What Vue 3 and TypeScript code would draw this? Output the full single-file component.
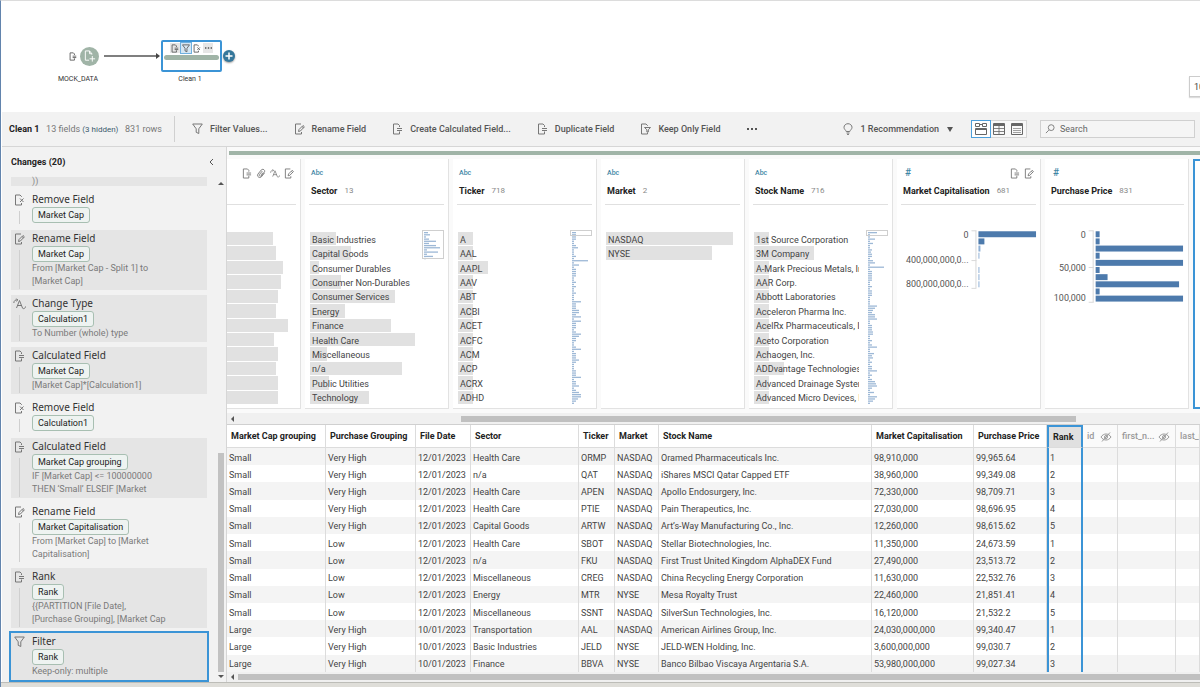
<script setup lang="ts">
interface Change {
  icon: string
  title: string
  field: string
  desc?: string[]
  plain?: boolean
  selected?: boolean
}

interface Bin {
  label: string
  w: number
}

interface Card {
  name: string
  type: string
  count: string
  icons: string[]
  bins?: Bin[]
  map?: number[]
  mapBox?: number
  clip?: boolean
  hist?: { axisX: number; rows: number; bars: number[]; labels: { text: string; y: number }[]; ticks: number[] }
}

const bins = (names: string[], widths: number[]): Bin[] =>
  names.map((label, i) => ({ label, w: widths[i] ?? 15 }))

const changes: Change[] = [
  { icon: 'remove', title: 'Remove Field', field: 'Market Cap', plain: true },
  { icon: 'rename', title: 'Rename Field', field: 'Market Cap', desc: ['From [Market Cap - Split 1] to', '[Market Cap]'] },
  { icon: 'type', title: 'Change Type', field: 'Calculation1', desc: ['To Number (whole) type'] },
  { icon: 'calc', title: 'Calculated Field', field: 'Market Cap', desc: ['[Market Cap]*[Calculation1]'] },
  { icon: 'remove', title: 'Remove Field', field: 'Calculation1', plain: true },
  { icon: 'calc', title: 'Calculated Field', field: 'Market Cap grouping', desc: ['IF [Market Cap] <= 100000000', 'THEN ‘Small’ ELSEIF [Market'] },
  { icon: 'rename', title: 'Rename Field', field: 'Market Capitalisation', desc: ['From [Market Cap] to [Market', 'Capitalisation]'], plain: true },
  { icon: 'calc', title: 'Rank', field: 'Rank', desc: ['{{PARTITION [File Date],', '[Purchase Grouping], [Market Cap'] },
  { icon: 'filter', title: 'Filter', field: 'Rank', desc: ['Keep-only: multiple'], selected: true },
]

const actions = [
  { icon: 'filter', label: 'Filter Values...' },
  { icon: 'rename', label: 'Rename Field' },
  { icon: 'calc', label: 'Create Calculated Field...' },
  { icon: 'calc', label: 'Duplicate Field' },
  { icon: 'keep', label: 'Keep Only Field' },
]

const leadBins = [46, 49, 56, 54, 51, 49, 61, 47, 51, 49, 51, 51]

const cards: Card[] = [
  {
    name: 'Sector', type: 'Abc', count: '13', icons: [],
    bins: bins(
      ['Basic Industries', 'Capital Goods', 'Consumer Durables', 'Consumer Non-Durables', 'Consumer Services', 'Energy', 'Finance', 'Health Care', 'Miscellaneous', 'n/a', 'Public Utilities', 'Technology'],
      [26, 41, 9, 31, 85, 35, 81, 105, 17, 92, 19, 59],
    ),
    map: [4, 6, 2, 5, 12, 5, 12, 16, 3, 14, 3, 9, 2], mapBox: 28,
  },
  {
    name: 'Ticker', type: 'Abc', count: '718', icons: [],
    bins: bins(['A', 'AAL', 'AAPL', 'AAV', 'ABT', 'ACBI', 'ACET', 'ACFC', 'ACM', 'ACP', 'ACRX', 'ADHD'], [15, 15, 30]),
    map: [4, 4, 4, 4, 2, 2, 4, 6, 2, 2, 2, 4, 2, 16, 2, 7, 2, 4, 4, 4, 4, 2, 2, 4, 2, 4, 2, 2, 4, 2, 2, 2, 9, 4, 4, 4, 7, 7, 4, 9, 2, 9, 4, 4, 4, 2, 4, 9, 7, 4, 4, 2, 2, 4, 9, 2, 4, 4, 4, 7, 4, 2, 2, 2, 4, 4, 4, 9, 2, 4, 4, 7, 2, 4, 7, 9, 9, 6, 4, 2],
    mapBox: 5,
  },
  { name: 'Market', type: 'Abc', count: '2', icons: [], bins: bins(['NASDAQ', 'NYSE'], [127, 106]) },
  {
    name: 'Stock Name', type: 'Abc', count: '716', icons: [], clip: true,
    bins: bins(
      ['1st Source Corporation', '3M Company', 'A-Mark Precious Metals, Inc.', 'AAR Corp.', 'Abbott Laboratories', 'Acceleron Pharma Inc.', 'AcelRx Pharmaceuticals, Inc.', 'Aceto Corporation', 'Achaogen, Inc.', 'ADDvantage Technologies', 'Advanced Drainage Systems', 'Advanced Micro Devices, Inc.'],
      [15, 60, 15, 15, 15, 15, 15, 15, 15, 30],
    ),
    map: [9, 2, 2, 7, 2, 5, 2, 2, 4, 3, 4, 4, 2, 5, 7, 2, 16, 2, 4, 4, 4, 4, 4, 2, 2, 4, 2, 4, 4, 4, 2, 2, 2, 2, 9, 7, 5, 4, 7, 7, 9, 2, 2, 4, 4, 4, 5, 5, 2, 2, 4, 2, 4, 9, 2, 2, 6, 4, 5, 2, 4, 2, 4, 4, 9, 2, 4, 2, 4, 7, 8, 9, 4, 2, 6, 2, 9, 7, 5, 2],
    mapBox: 5,
  },
  {
    name: 'Market Capitalisation', type: '#', count: '681', icons: ['calc', 'rename'],
    hist: {
      axisX: 80, rows: 8, bars: [58, 6, 2, 1, 0, 1, 1, 1],
      labels: [{ text: '0', y: 8 }, { text: '400,000,000,0...', y: 33 }, { text: '800,000,000,0...', y: 57 }],
      ticks: [0, 30, 58],
    },
  },
  {
    name: 'Purchase Price', type: '#', count: '831', icons: [],
    hist: {
      axisX: 49, rows: 10, bars: [4, 4, 88, 4, 88, 4, 12, 84, 4, 88],
      labels: [{ text: '0', y: 8 }, { text: '50,000', y: 41 }, { text: '100,000', y: 71 }],
      ticks: [0, 37, 72],
    },
  },
]

const columns = [
  { label: 'Market Cap grouping', cls: 'w-a' },
  { label: 'Purchase Grouping', cls: 'w-b' },
  { label: 'File Date', cls: 'w-c' },
  { label: 'Sector', cls: 'w-d' },
  { label: 'Ticker', cls: 'w-e' },
  { label: 'Market', cls: 'w-f' },
  { label: 'Stock Name', cls: 'w-g' },
  { label: 'Market Capitalisation', cls: 'w-h' },
  { label: 'Purchase Price', cls: 'w-i' },
  { label: 'Rank', cls: 'w-j', active: true },
  { label: 'id', cls: 'w-k', hidden: true },
  { label: 'first_n...', cls: 'w-l', hidden: true },
  { label: 'last_name', cls: 'w-m', hidden: true },
]

const V = 'Very High'
const N = 'NASDAQ'
const D = '12/01/2023'
const E = '10/01/2023'
const rows: string[][] = [
  ['Small', V, D, 'Health Care', 'ORMP', N, 'Oramed Pharmaceuticals Inc.', '98,910,000', '99,965.64', '1'],
  ['Small', V, D, 'n/a', 'QAT', N, 'iShares MSCI Qatar Capped ETF', '38,960,000', '99,349.08', '2'],
  ['Small', V, D, 'Health Care', 'APEN', N, 'Apollo Endosurgery, Inc.', '72,330,000', '98,709.71', '3'],
  ['Small', V, D, 'Health Care', 'PTIE', N, 'Pain Therapeutics, Inc.', '27,030,000', '98,696.95', '4'],
  ['Small', V, D, 'Capital Goods', 'ARTW', N, 'Art’s-Way Manufacturing Co., Inc.', '12,260,000', '98,615.62', '5'],
  ['Small', 'Low', D, 'Health Care', 'SBOT', N, 'Stellar Biotechnologies, Inc.', '11,350,000', '24,673.59', '1'],
  ['Small', 'Low', D, 'n/a', 'FKU', N, 'First Trust United Kingdom AlphaDEX Fund', '27,490,000', '23,513.72', '2'],
  ['Small', 'Low', D, 'Miscellaneous', 'CREG', N, 'China Recycling Energy Corporation', '11,630,000', '22,532.76', '3'],
  ['Small', 'Low', D, 'Energy', 'MTR', 'NYSE', 'Mesa Royalty Trust', '22,460,000', '21,851.41', '4'],
  ['Small', 'Low', D, 'Miscellaneous', 'SSNT', N, 'SilverSun Technologies, Inc.', '16,120,000', '21,532.2', '5'],
  ['Large', V, E, 'Transportation', 'AAL', N, 'American Airlines Group, Inc.', '24,030,000,000', '99,340.47', '1'],
  ['Large', V, E, 'Basic Industries', 'JELD', 'NYSE', 'JELD-WEN Holding, Inc.', '3,600,000,000', '99,030.7', '2'],
  ['Large', V, E, 'Finance', 'BBVA', 'NYSE', 'Banco Bilbao Viscaya Argentaria S.A.', '53,980,000,000', '99,027.34', '3'],
]
</script>

<template>
  <svg class="sprite" aria-hidden="true">
    <symbol id="i-calc" viewBox="0 0 11 12"><path d="M7.5 4V2.5L6 1H1.5v10h6V8.500M5 5.500h5M5 7.500h5" /></symbol>
    <symbol id="i-remove" viewBox="0 0 11 12"><path d="M7.5 3V2.5L6 1H1.500v10h6V9M6 4.500L9.500 8M9.500 4.500L6 8" /></symbol>
    <symbol id="i-rename" viewBox="0 0 11 12"><path d="M7 1H1.500v10h6V9M4.500 8.500L5 6.500l4-4 1.400 1.300-4 4.200zM8 3.500l1.400 1.300" /></symbol>
    <symbol id="i-keep" viewBox="0 0 11 12"><path d="M7.500 3V2.500L6 1H1.500v10h6V9.500M4.500 4.500h6L8.300 6.800V9H6.900V6.800z" /></symbol>
    <symbol id="i-filter" viewBox="0 0 11 12"><path d="M.7 1h9.600L6.800 5.800v4.700L4.200 9.300V5.800z" /></symbol>
    <symbol id="i-type" viewBox="0 0 13 12"><path d="M3.500 10l3-7.500 3 7.500M4.500 7.500h4M.8 5C1 2.500 2.500 1.500 4.500 2M3.400.6L4.800 2 3.400 3.300M9.500 10.300c1.500.8 2.700.2 3-1.800" /></symbol>
    <symbol id="i-clip" viewBox="0 0 11 12"><path d="M9.300 5.500L5.800 9.800C4.300 11.500.5 9.500 2 6.800L5.700 2.200C7.500.2 10.700 2.300 9.200 4.500L5.600 8.700C4.700 9.600 2.800 8.400 3.700 7.100L7 3.300M7.800 5L5.500 7.500" /></symbol>
    <symbol id="i-bulb" viewBox="0 0 10 12"><path d="M3.200 8.500C2.800 7 1 6.300 1 4.300 1 2.300 2.800.7 5 .7s4 1.600 4 3.600c0 2-1.800 2.700-2.200 4.200zM3.500 10h3M4 11.400h2" /></symbol>
    <symbol id="i-search" viewBox="0 0 11 11"><path d="M4.200 6.800L1 10M10 4a3.200 3.200 0 1 1-6.400 0A3.200 3.200 0 0 1 10 4z" /></symbol>
    <symbol id="i-eye" viewBox="0 0 12 10"><path d="M1 5c2.500-4 7.500-4 10 0-2.500 4-7.500 4-10 0zM7.500 5a1.500 1.500 0 1 1-3 0 1.500 1.500 0 0 1 3 0zM2 9.500L10 .5" /></symbol>
    <symbol id="i-doc" viewBox="0 0 12 14"><path d="M8 5V4L5.500 1H1v10h4M5.500 1v3H8M8.500 6.500v6M5.500 9.500h6" /></symbol>
    <symbol id="i-dots" viewBox="0 0 10 2"><path d="M0 0h2v2H0zM4 0h2v2H4zM8 0h2v2H8z" /></symbol>
    <symbol id="i-profile" viewBox="0 0 12 12"><path d="M.5.500h4v3h-4zM7.500.500h4v3h-4zM.5 5.500h11v6H.5zM.5 6.500h11M4.500 1.500h3" /></symbol>
    <symbol id="i-grid" viewBox="0 0 12 12"><path d="M.5.500h11v11H.5zM.5 1.500h11M.5 2.500h11" /><path d="M.5 5.500h11M.5 8.500h11M6 2.500v9" opacity=".8" /></symbol>
    <symbol id="i-list" viewBox="0 0 12 12"><path d="M.5.500h11v11H.5zM.5 1.500h11M.5 2.500h11" /><path d="M2 5.500h8M2 7.500h8M2 9.500h8" opacity=".6" /></symbol>
  </svg>

  <div class="app">
    <section class="flow">
      <div class="node source">
        <svg class="ic tiny"><use href="#i-calc" /></svg>
        <span class="disc"><svg class="doc"><use href="#i-doc" /></svg></span>
      </div>
      <span class="node-label source-label">MOCK_DATA</span>
      <svg class="arrow" viewBox="0 0 56 6"><path d="M0 3h53" stroke="#555" stroke-width="1.5" /><path d="M52 0l4 3-4 3z" fill="#444" /></svg>
      <div class="step">
        <div class="step-icons">
          <span class="si shade"><svg class="ic tiny"><use href="#i-calc" /></svg></span>
          <span class="si on"><svg class="ic tiny"><use href="#i-filter" /></svg></span>
          <span class="si"><svg class="ic tiny"><use href="#i-remove" /></svg></span>
          <span class="si shade"><svg class="dots small"><use href="#i-dots" /></svg></span>
        </div>
        <div class="band"></div>
      </div>
      <button class="plus" aria-label="Add step"><svg viewBox="0 0 12 12"><path d="M6 2.5v7M2.5 6h7" stroke="#fff" stroke-width="1.5" /></svg></button>
      <span class="node-label step-label">Clean 1</span>
      <button class="zoom-box">100%</button>
    </section>

    <header class="toolbar">
      <div class="summary">
        <strong>Clean 1</strong>
        <span class="muted">13 fields <a href="#" class="hid">(3 hidden)</a></span>
        <span class="muted">831 rows</span>
      </div>
      <nav class="actions">
        <button v-for="a in actions" :key="a.label" class="action">
          <svg class="ic"><use :href="'#i-' + a.icon" /></svg>{{ a.label }}
        </button>
        <button class="action" aria-label="More"><svg class="dots"><use href="#i-dots" /></svg></button>
      </nav>
      <div class="right-tools">
        <button class="reco"><svg class="ic bulb"><use href="#i-bulb" /></svg>1 Recommendation<i class="caret"></i></button>
        <div class="views">
          <button class="view on" aria-label="Profile view"><svg class="ic v"><use href="#i-profile" /></svg></button>
          <button class="view" aria-label="Grid view"><svg class="ic v"><use href="#i-grid" /></svg></button>
          <button class="view" aria-label="List view"><svg class="ic v"><use href="#i-list" /></svg></button>
        </div>
        <label class="search"><svg class="ic glass"><use href="#i-search" /></svg><input type="text" placeholder="Search" aria-label="Search" /></label>
      </div>
    </header>

    <main class="main">
      <aside class="pane">
        <div class="pane-head">
          <h2>Changes (20)</h2>
          <button class="collapse" aria-label="Collapse"><svg viewBox="0 0 5 8"><path d="M4 1L1 4l3 3" fill="none" stroke="#555" /></svg></button>
        </div>
        <div class="pane-body">
          <ul class="changes">
            <li class="cut"><span>))</span></li>
            <li v-for="(c, i) in changes" :key="i" class="change" :class="{ plain: c.plain, selected: c.selected }">
              <span class="mark"><svg class="ic" :class="{ wide: c.icon === 'type' }"><use :href="'#i-' + c.icon" /></svg></span>
              <div class="detail">
                <h3>{{ c.title }}</h3>
                <span class="chip">{{ c.field }}</span>
                <p v-for="d in c.desc" :key="d">{{ d }}</p>
              </div>
            </li>
          </ul>
          <div class="vbar"><i class="up"></i><div class="vtrack"><b></b></div><i class="down"></i></div>
        </div>
      </aside>

      <section class="work">
        <div class="profile">
          <div class="green"></div>
          <div class="cards">
            <article class="card lead">
              <div class="card-head">
                <div class="card-top end">
                  <svg class="ic sm"><use href="#i-calc" /></svg>
                  <svg class="ic sm"><use href="#i-clip" /></svg>
                  <svg class="ic sm"><use href="#i-type" /></svg>
                  <svg class="ic sm"><use href="#i-rename" /></svg>
                </div>
              </div>
              <ul class="bins">
                <li v-for="(w, i) in leadBins" :key="i"><b :style="{ width: w + 'px' }"></b></li>
              </ul>
            </article>
            <article v-for="c in cards" :key="c.name" class="card">
              <div class="card-head">
                <div class="card-top">
                  <span class="kind" :class="{ num: c.type === '#' }">{{ c.type }}</span>
                  <span class="badges"><svg v-for="n in c.icons" :key="n" class="ic sm"><use :href="'#i-' + n" /></svg></span>
                </div>
                <div class="card-title"><strong>{{ c.name }}</strong><span>{{ c.count }}</span></div>
              </div>
              <div class="card-body">
                <ul v-if="c.bins" class="bins" :class="{ clip: c.clip }">
                  <li v-for="b in c.bins" :key="b.label"><b :style="{ width: b.w + 'px' }"></b><span>{{ b.label }}</span></li>
                </ul>
                <svg v-if="c.map" class="map" viewBox="0 0 23 176">
                  <rect v-for="(w, i) in c.map" :key="i" x="2" :y="2 + i * 2.16" :width="w" height="1.3" fill="#9db8d6" />
                  <rect x=".5" y=".5" width="21" :height="c.mapBox" fill="none" stroke="#cfcfcf" />
                </svg>
                <svg v-if="c.hist" class="hist" viewBox="0 0 144 80">
                  <path :d="`M${c.hist.axisX - 0.5} 0.5V${c.hist.rows * 7.2 + 0.5}` + c.hist.ticks.map(t => `M${c.hist!.axisX - 5} ${t + 0.5}h5`).join('')" stroke="#d9d9d9" fill="none" />
                  <rect v-for="(w, i) in c.hist.bars" :key="i" :x="c.hist.axisX + 2" :y="1 + i * 7.2" :width="w" height="6" :fill="w < 3 ? '#8fb0d6' : '#4d7aac'" />
                  <text v-for="l in c.hist.labels" :key="l.text" :x="c.hist.axisX - 8" :y="l.y" text-anchor="end">{{ l.text }}</text>
                </svg>
              </div>
            </article>
            <article class="card picked"></article>
          </div>
          <div class="hbar"><i></i><div class="gap"></div><b></b></div>
        </div>

        <div class="grid">
          <table>
            <colgroup><col v-for="c in columns" :key="c.label" :class="c.cls" /></colgroup>
            <thead>
              <tr>
                <th v-for="c in columns" :key="c.label" :class="{ active: c.active, hiddenf: c.hidden }">
                  {{ c.label }}<svg v-if="c.hidden && c.label !== 'last_name'" class="ic eye"><use href="#i-eye" /></svg>
                </th>
              </tr>
            </thead>
            <tbody>
              <tr v-for="(r, i) in rows" :key="i">
                <td v-for="(c, j) in columns" :key="c.label" :class="{ active: c.active }">{{ r[j] ?? '' }}</td>
              </tr>
            </tbody>
          </table>
        </div>
        <div class="hbar low"><i></i><b></b></div>
      </section>
    </main>
    <footer class="status"></footer>
  </div>
</template>

<style>
html, body { margin: 0; background: #fff; }
</style>

<style scoped>
.sprite { position: absolute; width: 0; height: 0; }
.app {
  display: flex; flex-direction: column; min-height: 100vh; box-sizing: border-box;
  border-left: 1px solid #6284ad; border-top: 1px solid #dcdcdc; overflow: hidden;
  font: 9px/12px Roboto, "Liberation Sans", sans-serif; color: #444; background: #fff;
}
button { font: inherit; color: inherit; background: none; border: 0; padding: 0; margin: 0; white-space: nowrap; }
ul { list-style: none; margin: 0; padding: 0; }
h2, h3, p { margin: 0; }
.ic { width: 11px; height: 12px; flex: none; fill: none; stroke: #777; stroke-width: 1; }
.dots { width: 10px; height: 2px; fill: #555; }
.dots.small { width: 7px; }

.flow { position: relative; height: 111px; }
.node { position: absolute; left: 68px; top: 46px; display: flex; align-items: center; gap: 3px; }
.tiny { width: 8px; height: 9px; stroke: #666; stroke-width: 1.3; }
.disc { width: 19px; height: 19px; border-radius: 50%; background: #a0b4a7; display: grid; place-items: center; }
.doc { width: 12px; height: 13px; fill: none; stroke: #fff; stroke-width: 1; }
.node-label { position: absolute; top: 72px; width: 60px; text-align: center; font-size: 7px; color: #333; }
.source-label { left: 47px; }
.step-label { left: 159px; }
.arrow { position: absolute; left: 103px; top: 52px; width: 56px; height: 6px; fill: none; }
.step { position: absolute; left: 160px; top: 39px; width: 61px; height: 32px; box-sizing: border-box; border: 2px solid #3b94d6; border-radius: 2px; background: #fff; }
.step-icons { display: flex; justify-content: center; gap: 1px; padding-top: 1px; }
.si { width: 10px; height: 10px; display: grid; place-items: center; }
.shade { background: #e6e6e6; }
.si.on { background: #d5e6f3; outline: 1px solid #6fb0df; }
.band { height: 5px; margin: 2px 1px 0; border-radius: 3px; background: #a0b4a7; }
.plus { position: absolute; left: 222px; top: 49px; width: 12px; height: 12px; border-radius: 50%; background: #35779b; box-shadow: 0 1px 2px #999; display: grid; }
.plus svg { width: 12px; height: 12px; }
.zoom-box { position: absolute; left: 1188px; top: 75px; width: 50px; height: 21px; box-sizing: border-box; border: 1px solid #ccc; padding-left: 4px; text-align: left; background: #fff; box-shadow: 0 1px 1px #ddd; }

.toolbar { display: flex; align-items: center; height: 34px; margin-left: 1px; background: #f2f2f2; border-bottom: 1px solid #d6d6d6; }
.summary { display: flex; align-items: center; justify-content: space-between; height: 26px; padding: 0 12px 0 7px; box-sizing: border-box; border-right: 1px solid #d0d0d0; width: 173px; white-space: nowrap; }
.summary strong { color: #222; }
.muted { color: #777; }
.hid { color: #3c5a6e; text-decoration: none; font-size: 8px; }
.actions { display: flex; align-items: center; gap: 26px; margin-left: 17px; }
.action { display: flex; align-items: center; gap: 7px; font-weight: 500; color: #555; }
.right-tools { display: flex; align-items: center; margin-left: auto; padding-right: 5px; }
.reco { display: flex; align-items: center; gap: 8px; color: #555; font-weight: 500; }
.bulb { width: 10px; height: 12px; }
.caret { border: 3px solid transparent; border-top: 5px solid #555; border-bottom: 0; }
.views { display: flex; margin: 0 13px 0 18px; border: 1px solid #d6d6d6; }
.view { width: 18px; height: 16px; display: grid; place-items: center; background: #f8f8f8; }
.view.on { background: #fff; outline: 1px solid #4d9fdb; z-index: 1; }
.v { width: 12px; height: 12px; stroke: #666; }
.search { display: flex; align-items: center; width: 155px; height: 18px; box-sizing: border-box; border: 1px solid #d0d0d0; padding: 0 4px; gap: 4px; background: #f5f5f5; }
.glass { width: 10px; height: 10px; }
.search input { font: inherit; color: #555; border: 0; background: none; outline: 0; padding: 0 0 0 1px; min-width: 0; flex: 1; }
.search input::placeholder { color: #666; opacity: 1; }

.main { display: flex; flex: 1; min-height: 0; }
.pane { width: 225px; flex: none; box-sizing: border-box; margin-left: 1px; background: #f2f2f2; border-right: 1px solid #d6d6d6; }
.pane-head { display: flex; align-items: center; justify-content: space-between; height: 30px; padding: 0 12px 0 9px; }
.pane-head h2 { font-size: 9px; font-weight: 700; color: #222; }
.collapse svg { width: 5px; height: 8px; display: block; }
.pane-body { display: flex; justify-content: space-between; }
.changes { width: 200px; padding-left: 7px; display: flex; flex-direction: column; gap: 5px; }
.cut { height: 9px; margin: 0 2px; background: #e5e5e5; padding-left: 21px; color: #888; box-sizing: border-box; }
.cut span { display: block; line-height: 8px; }
.change { display: flex; margin: 0 2px; background: #e5e5e5; }
.change.plain { background: none; }
.selected { outline: 2px solid #3b94d6; }
.mark { width: 21px; flex: none; display: flex; flex-direction: column; padding: 3px 0 0 3px; box-sizing: border-box; }
.mark::after { content: ""; width: 1px; flex: 1; margin: 5px 0 1px 5px; background: #cfcfcf; }
.selected .mark::after { background: none; }
.wide { width: 13px; margin-left: -1px; }
.detail { padding-bottom: 2px; white-space: nowrap; }
.detail h3 { font: 400 10px/16px "Noto Sans", sans-serif; color: #333; }
.chip { display: block; width: fit-content; height: 16px; line-height: 14px; box-sizing: border-box; border: 1px solid #a8bfb2; border-radius: 3px; background: #eef3f1; padding: 0 5px; color: #222; }
.detail p { line-height: 13px; color: #7a7a7a; }
.vbar { width: 11px; display: flex; flex-direction: column; align-items: center; padding: 5px 0 2px; box-sizing: border-box; }
.up { border: 3px solid transparent; border-top: 0; border-bottom: 3px solid #555; }
.down { border: 3px solid transparent; border-bottom: 0; border-top: 3px solid #555; }
.vtrack { flex: 1; width: 6px; display: flex; flex-direction: column; justify-content: flex-end; padding-bottom: 3px; }
.vtrack b { height: 45%; background: #c2c2c2; }

.work { flex: 1; min-width: 0; display: flex; flex-direction: column; }
.profile { background: #fafafa; border-bottom: 1px solid #d0d0d0; }
.green { height: 4px; margin: 4px 0 4px 2px; background: #a0b4a7; }
.cards { display: flex; gap: 4px; height: 250px; overflow: hidden; }
.card { width: 144px; flex: none; box-sizing: border-box; background: #fff; border-right: 1px solid #e2e2e2; border-bottom: 1px solid #e2e2e2; }
.lead { width: 74px; }
.picked { border: 2px solid #3b94d6; }
.card-head { height: 46px; box-sizing: border-box; margin: 0 4px; border-bottom: 1px solid #e0e0e0; padding: 8px 2px 0; white-space: nowrap; }
.lead .card-head { margin-left: 0; }
.card-top { display: flex; justify-content: space-between; align-items: center; height: 12px; }
.card-top.end { justify-content: flex-end; gap: 4px; }
.badges { display: flex; gap: 4px; }
.sm { width: 10px; height: 11px; }
.kind { font-size: 7px; font-weight: 500; color: #3f86a5; }
.kind.num { font-size: 10px; padding-left: 2px; }
.card-title { display: flex; gap: 7px; margin-top: 6px; }
.card-title strong { color: #222; }
.card-title span { font-size: 8px; color: #888; }
.card-body { display: flex; }
.bins { display: grid; grid-template-rows: repeat(12, 1fr); height: 173px; margin: 27px 0 0 5px; flex: 1; min-width: 0; }
.lead .bins { margin-left: 0; }
.clip { overflow: hidden; }
.bins li { position: relative; white-space: nowrap; display: flex; align-items: center; min-width: 0; }
.bins b { position: absolute; left: 0; top: 0; bottom: 1px; background: #e1e1e1; }
.bins span { position: relative; padding: 1px 0 0 2px; }
.map { width: 23px; height: 176px; margin: 25px 3px 0 7px; flex: none; }
.hist { width: 144px; height: 80px; margin-top: 25px; }
.hist text { font: 9px Roboto, sans-serif; fill: #555; }
.hbar { display: flex; align-items: center; height: 11px; background: #f0f0f0; margin-top: 4px; }
.hbar i { border: 3px solid transparent; border-left: 0; border-right: 3px solid #555; margin-left: 4px; }
.gap { width: 227px; }
.hbar b { height: 6px; width: 615px; background: #c0c0c0; }
.hbar.low { margin-top: 0; height: 10px; }
.hbar.low b { flex: 1; width: auto; margin-left: 4px; }

.grid { flex: 1; display: grid; overflow: hidden; }
table { width: 100%; table-layout: fixed; border-collapse: separate; border-spacing: 0; }
.w-a { width: 99px; } .w-b { width: 90px; } .w-c { width: 55px; } .w-d { width: 108px; }
.w-e { width: 36px; } .w-f { width: 44px; } .w-g { width: 213px; } .w-h { width: 102px; }
.w-i { width: 73px; } .w-j { width: 36px; } .w-k { width: 35px; } .w-l { width: 58px; }
th, td { box-sizing: border-box; padding: 0; text-align: left; white-space: nowrap; overflow: hidden; border-right: 1px solid #dcdcdc; line-height: 12px; vertical-align: middle; }
th { height: 23px; padding-left: 4px; color: #222; font-weight: 700; border-bottom: 1px solid #dcdcdc; }
td { height: 17px; padding-left: 2px; padding-top: 2px; }
tbody tr:nth-child(odd) { background: #f4f4f4; }
.active { border-left: 2px solid #3b94d6; border-right: 2px solid #3b94d6; }
th.active { background: #e0e0e0; border-top: 2px solid #3b94d6; }
td.active { padding-left: 1px; }
.hiddenf { color: #999; background: #fafafa; font-weight: 500; }
.eye { width: 12px; height: 10px; margin-left: 6px; vertical-align: middle; stroke: #999; }
th:nth-child(12) .eye { margin-left: 3px; }
.status { height: 4px; background: #dfded9; border-top: 1px solid #bdbdb8; }
</style>
